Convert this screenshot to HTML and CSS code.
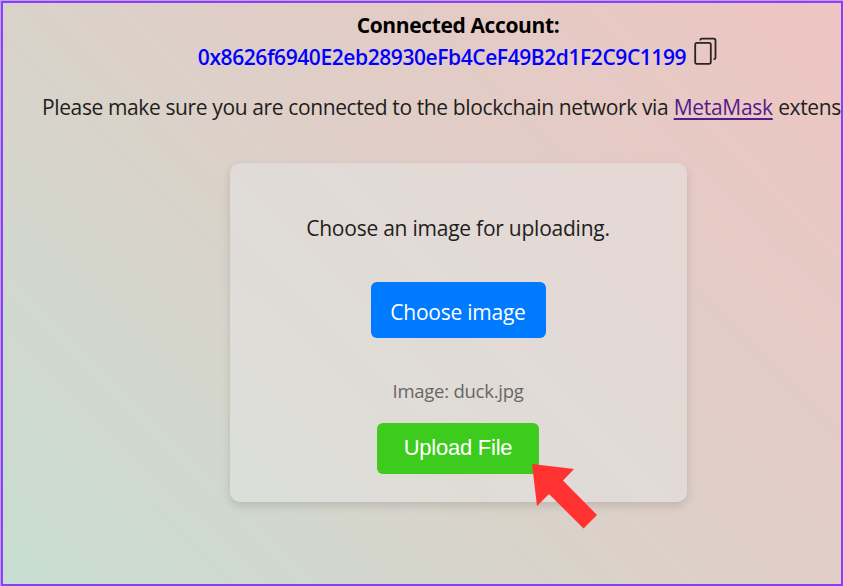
FILE: index.html
```html
<!DOCTYPE html>
<html lang="en">
<head>
<meta charset="utf-8">
<title>Image upload</title>
<link rel="stylesheet" href="styles.css">
</head>
<body>
<main class="frame">
  <div class="content">
    <header class="account">
      <h1 class="account-title"><span>Connected Account:</span></h1>
      <div class="account-row">
        <span class="address">0x8626f6940E2eb28930eFb4CeF49B2d1F2C9C1199</span>
        <svg class="copy" viewBox="0 0 24 29" width="24" height="29" fill="none" stroke="#292322" stroke-width="1.8"><rect x="1.2" y="5.8" width="15.6" height="21" rx="1.8"/><path d="M6.3 3.6V3Q6.3 1.6 7.9 1.6H19.7Q21.500 1.6 21.500 3.400V20.600Q21.500 22.200 20.100 22.200H19.500"/></svg>
      </div>
    </header>
    <p class="notice"><span class="notice-text">Please make sure you are connected to the blockchain network via</span> <a class="link" href="#">MetaMask</a> <span class="notice-text">extens</span></p>
    <section class="card">
      <p class="prompt">Choose an image for uploading.</p>
      <label class="choose">Choose image</label>
      <p class="filename">Image: duck.jpg</p>
      <button class="upload" type="button">Upload File</button>
      <svg class="pointer" viewBox="0 0 66 66" width="66" height="66"><path fill="#ff3131" d="M0 0L42 5L31 16.5L65 51L51.500 64.500L17 30L5 42Z"/></svg>
    </section>
  </div>
</main>
</body>
</html>
```
FILE: styles.css
```css
* { box-sizing: border-box; }
body {
  margin: 0;
  width: 843px;
  height: 586px;
  padding: 1px 0 0 1px;
  overflow: hidden;
  background: #bea0f5;
  font-family: "Open Sans", "Noto Sans", sans-serif;
  font-size: 21px;
  color: #211e1d;
}
p, h1 { margin: 0; }
.frame {
  height: 585px;
  border: 2px solid #8c3eff;
  overflow: hidden;
  background: linear-gradient(45deg, #c8ded2, #ddd0c8 50%, #eec5c2);
}
.content {
  width: 910px;
  display: flex;
  flex-direction: column;
  align-items: center;
}
.account {
  height: 72px;
  display: flex;
  flex-direction: column;
  align-items: center;
}
.account-title {
  margin-top: 6px;
  font-size: 21px;
  line-height: 32px;
  font-weight: 700;
  color: #000;
  letter-spacing: -0.37px;
}
.account-row {
  display: flex;
  align-items: flex-start;
  gap: 8px;
  height: 32px;
}
.address {
  font-weight: 600;
  line-height: 32px;
  color: #00f;
  letter-spacing: -0.42px;
}
.copy { margin-top: -4px; }
.notice {
  margin-top: 16px;
  align-self: flex-start;
  padding-left: 39px;
  line-height: 32px;
  white-space: nowrap;
}
.notice-text { letter-spacing: -0.38px; }
.link {
  color: #551a8b;
  letter-spacing: -0.3px;
  text-decoration-thickness: 2px;
  text-underline-offset: 3px;
}
.card {
  position: relative;
  width: 457px;
  height: 339px;
  margin-top: 40px;
  padding-top: 49px;
  border-radius: 10px;
  background: rgba(230, 230, 230, 0.5);
  box-shadow: 0 4px 10px rgba(0, 0, 0, 0.13);
  display: flex;
  flex-direction: column;
  align-items: center;
  white-space: nowrap;
}
.prompt {
  line-height: 32px;
  letter-spacing: -0.24px;
}
.choose {
  margin-top: 38px;
  width: 175px;
  height: 56px;
  padding-top: 4px;
  line-height: 52px;
  text-align: center;
  letter-spacing: -0.24px;
  border-radius: 6px;
  background: #007bff;
  color: #fff;
}
.filename {
  margin-top: 38px;
  font-size: 18.5px;
  line-height: 30px;
  letter-spacing: -0.25px;
  color: #696665;
}
.upload {
  margin-top: 17px;
  width: 162px;
  height: 51px;
  padding: 0 0 2px;
  border: 0;
  border-radius: 6px;
  background: #3dcc1d;
  color: #fff;
  font: 22px "Liberation Sans", sans-serif;
  letter-spacing: -0.25px;
}
.pointer {
  position: absolute;
  left: 302px;
  top: 301px;
}
```
